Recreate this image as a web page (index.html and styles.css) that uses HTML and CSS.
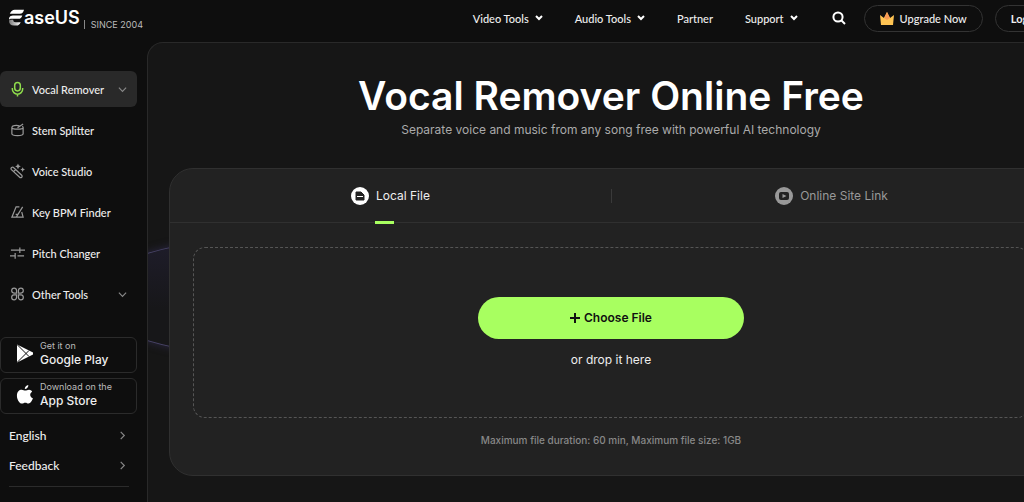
FILE: index.html
```html
<!DOCTYPE html>
<html lang="en">
<head>
  <meta charset="UTF-8" />
  <meta name="viewport" content="width=device-width, initial-scale=1" />
  <title>Vocal Remover Online Free - EaseUS</title>
  <link rel="stylesheet" href="styles.css">
</head>
<body>
<div class="page">
  <header class="topbar">
    <a class="logo" href="#" aria-label="EaseUS">
      <svg class="logo-mark" viewBox="0 0 18 20" aria-hidden="true">
        <defs>
          <linearGradient id="fade" x1="1" x2="0">
            <stop offset="0" stop-color="#fff" />
            <stop offset="1" stop-color="#777" />
          </linearGradient>
        </defs>
        <path fill="#fff" d="M1 5C2 2 4 0 7 0h11c-1 3-2 5-5 5z" />
        <path fill="#fff" d="M0 12c0-4 2-5 6-5h10c-1 3-2 4-5 4H6c-3 0-5 0-6 1z" />
        <path fill="url(#fade)" d="M0 13c1-1 3-1 5-1 0 2 1 3 3 3h6c-1 3-3 4-5 4H6c-4 0-6-2-6-6z" />
      </svg>
      <span class="logo-text">aseUS</span>
      <span class="since">SINCE 2004</span>
    </a>
    <nav class="topnav">
      <a href="#">Video Tools <svg class="caret" viewBox="0 0 8 6"><path d="M1 1l3 3 3-3" /></svg></a>
      <a href="#">Audio Tools <svg class="caret" viewBox="0 0 8 6"><path d="M1 1l3 3 3-3" /></svg></a>
      <a href="#">Partner</a>
      <a href="#">Support <svg class="caret" viewBox="0 0 8 6"><path d="M1 1l3 3 3-3" /></svg></a>
    </nav>
    <div class="actions">
      <button class="search" aria-label="Search">
        <svg viewBox="0 0 14 14"><circle cx="6" cy="6" r="4.6" /><path d="M9.500 9.500L13 13" /></svg>
      </button>
      <a class="pill upgrade" href="#">
        <svg class="crown" viewBox="0 0 14 13">
          <path fill="#ffc453" d="M0 3l4 3 3-6 3 6 4-3-1 10H1z" />
          <path fill="#f79a55" d="M7 0L4 6l3 2 3-2z" />
        </svg>
        Upgrade Now
      </a>
      <a class="pill login" href="#">Log in</a>
    </div>
  </header>

  <div class="layout">
    <aside class="sidebar">
      <nav class="tools">
        <a class="tool active" href="#">
          <svg viewBox="0 0 16 16"><rect x="5" y="1" width="6" height="9" rx="3" /><path d="M2.500 7v1a5.500 5.500 0 0 0 11 0V7M8 13.500V16" /></svg>
          <span>Vocal Remover</span>
          <svg class="arrow" viewBox="0 0 10 10"><path d="M1 3l4 4 4-4" /></svg>
        </a>
        <a class="tool" href="#">
          <svg viewBox="0 0 16 16"><path d="M10 3.500C6 2.700 2 3.500 2 5.200c0 2.400 12 2.400 12 0 0-.5-.4-.9-1-1.200M2 5.200V12c0 2.600 12 2.600 12 0V5.200M8 5.500L14 1.500" /></svg>
          <span>Stem Splitter</span>
        </a>
        <a class="tool" href="#">
          <svg viewBox="0 0 16 16"><path d="M1.500 6.500a1.500 1.500 0 0 1 2.500-2l8.500 8a1.500 1.500 0 0 1-2.200 2.200zM4 8.500l2-2" /><path class="solid" d="M8.500 0l1 2 2 1-2 1-1 2-1-2-2-1 2-1zM13.500 4l.8 1.700 1.700.8-1.700.8-.8 1.700-.8-1.700-1.700-.8 1.700-.8z" /></svg>
          <span>Voice Studio</span>
        </a>
        <a class="tool" href="#">
          <svg viewBox="0 0 16 16"><path d="M10 2.500H6.500L2 13.500h12L12.500 8M7 13l6.500-10.500M6 10.500h3" /></svg>
          <span>Key BPM Finder</span>
        </a>
        <a class="tool" href="#">
          <svg viewBox="0 0 16 16"><path d="M1 5h9M10.500 2v6M11 5h5M0 11h5M5.500 8v6M8 11h7" /></svg>
          <span>Pitch Changer</span>
        </a>
        <a class="tool" href="#">
          <svg viewBox="0 0 16 16"><path d="M7 7H4.200A2.600 2.600 0 1 1 7 4.200zM9 7V4.200A2.600 2.600 0 1 1 11.800 7zM7 9v2.800A2.600 2.600 0 1 1 4.200 9zM9 9h2.800A2.600 2.600 0 1 1 9 11.800z" /></svg>
          <span>Other Tools</span>
          <svg class="arrow" viewBox="0 0 10 10"><path d="M1 3l4 4 4-4" /></svg>
        </a>
      </nav>

      <div class="stores">
        <a class="store" href="#">
          <svg viewBox="0 0 18 18"><path fill="#fff" d="M1 0l16 8v2L1 18z" /><path fill="none" stroke="#111" d="M1 0l12 12M1 18L13 6" /></svg>
          <span><small>Get it on</small>Google Play</span>
        </a>
        <a class="store" href="#">
          <svg viewBox="0 0 18 20"><path fill="#fff" d="M12.500 0c.2 2-1.500 4.200-3.700 4.200C8.500 2.300 10.300.3 12.500 0zM16.500 7c-3 1.800-2.500 5.500.8 7-.8 2.500-2.600 5.500-4.600 5.500-1.300 0-1.800-.8-3.400-.8s-2.100.8-3.400.8C3 19.500.5 15 .5 11.200.5 7 3 5 5.500 5c1.600 0 2.700.9 3.800.9S11.700 5 13.300 5c1.300 0 2.500.8 3.200 2z" /></svg>
          <span><small>Download on the</small>App Store</span>
        </a>
      </div>

      <div class="links">
        <a href="#">English <svg class="arrow" viewBox="0 0 10 10"><path d="M3 1l4 4-4 4" /></svg></a>
        <a href="#">Feedback <svg class="arrow" viewBox="0 0 10 10"><path d="M3 1l4 4-4 4" /></svg></a>
      </div>
    </aside>

    <main class="content">
      <h1>Vocal Remover Online Free</h1>
      <p class="subtitle">Separate voice and music from any song free with powerful AI technology</p>

      <section class="card">
        <div class="tabs" role="tablist">
          <button class="tab selected" role="tab" aria-selected="true">
            <svg viewBox="0 0 18 18"><circle cx="9" cy="9" r="9" fill="#fff" /><path fill="#222" d="M5 5h5l3 3v5H5z" stroke="#222" stroke-linejoin="round" /><path stroke="#fff" d="M6 9.500h6" /></svg>
            Local File
          </button>
          <button class="tab" role="tab" aria-selected="false">
            <svg viewBox="0 0 18 18"><circle cx="9" cy="9" r="9" fill="#999" /><rect x="4" y="5" width="10" height="8" rx="2" fill="#222" /><path fill="#999" d="M7.500 7l4 2-4 2z" /></svg>
            Online Site Link
          </button>
        </div>
        <div class="dropzone">
          <button class="choose">
            <svg viewBox="0 0 10 10"><path d="M5 0v10M0 5h10" /></svg>
            Choose File
          </button>
          <p>or drop it here</p>
        </div>
        <p class="limits">Maximum file duration: 60 min, Maximum file size: 1GB</p>
      </section>
    </main>
  </div>
</div>
</body>
</html>
```
FILE: styles.css
```css
* {
  box-sizing: border-box;
}
body {
  margin: 0;
  background-color: #0e0e0e;
  color: #eee;
  font-family: Inter, "Noto Sans", Arial, sans-serif;
  font-size: 12px;
  font-weight: 400;
  overflow: hidden;
}
a {
  color: inherit;
  text-decoration: none;
}
button {
  font: inherit;
  color: inherit;
  background: none;
  border: 0;
  padding: 0;
  cursor: pointer;
}
h1,
p {
  margin: 0;
}
svg {
  flex: none;
}
.page {
  min-width: 1074px;
  min-height: 100vh;
  display: flex;
  flex-direction: column;
}

/* header */
.topbar {
  height: 42px;
  padding: 0 18px 6px 9px;
  display: flex;
  align-items: center;
}
.logo {
  display: flex;
  align-items: center;
  margin-right: auto;
}
.logo-mark {
  width: 15px;
  height: 20px;
}
.logo-text {
  font-size: 18px;
  font-weight: 600;
  line-height: 20px;
  color: #fff;
}
.since {
  margin: 12px 0 0 4px;
  padding-left: 6px;
  border-left: 1px solid #888;
  font-size: 9px;
  line-height: 9px;
  color: #bbb;
}
.topnav,
.pill,
.tool,
.links {
  font-family: Lato, "Noto Sans", Arial, sans-serif;
  font-size: 11px;
  font-weight: 500;
}
.topnav {
  display: flex;
  gap: 32px;
}
.topnav a {
  display: flex;
  align-items: center;
  gap: 6px;
}
.caret {
  width: 8px;
  height: 6px;
  fill: none;
  stroke: #fff;
  stroke-width: 2;
}
.actions {
  display: flex;
  align-items: center;
  gap: 12px;
  margin-left: 34px;
}
.search {
  display: flex;
  margin-right: 6px;
}
.search svg {
  width: 14px;
  height: 14px;
  fill: none;
  stroke: #fff;
  stroke-width: 2;
}
.pill {
  height: 27px;
  padding: 0 15px;
  display: flex;
  align-items: center;
  gap: 6px;
  border: 1px solid #333;
  border-radius: 14px;
}
.crown {
  width: 14px;
  height: 13px;
}
.login {
  font-weight: 700;
}

/* sidebar */
.layout {
  display: flex;
  flex: 1;
}
.sidebar {
  width: 137px;
  padding-top: 29px;
}
.tools {
  display: flex;
  flex-direction: column;
  gap: 5px;
}
.tool {
  height: 36px;
  padding: 0 10px;
  display: flex;
  align-items: center;
  gap: 7px;
  border-radius: 6px;
  white-space: nowrap;
}
.tool svg {
  width: 15px;
  height: 16px;
  fill: none;
  stroke: #999;
  stroke-width: 1.3;
}
.tool svg .solid {
  fill: #999;
  stroke: none;
}
.tool.active {
  background-color: #292929;
}
.tool.active svg:first-child {
  stroke: #8fdc4c;
  stroke-width: 1.6;
}
.tool .arrow,
.links .arrow {
  width: 9px;
  height: 9px;
  margin-left: auto;
  fill: none;
  stroke: #888;
  stroke-width: 1.3;
}
.stores {
  display: flex;
  flex-direction: column;
  gap: 5px;
  margin-top: 25px;
}
.store {
  height: 36px;
  padding: 0 0 4px 15px;
  display: flex;
  align-items: center;
  gap: 6px;
  border: 1px solid #2b2b2b;
  border-radius: 6px;
  font-weight: 500;
  line-height: 15px;
}
.store svg {
  width: 18px;
  height: 19px;
}
.store small {
  display: block;
  font-size: 9px;
  font-weight: 400;
  line-height: 12px;
  color: #bbb;
}
.links {
  margin: 6px 8px 0 9px;
  padding-bottom: 6px;
  border-bottom: 1px solid #2b2b2b;
  font-size: 12px;
}
.links a {
  height: 30px;
  padding-right: 2px;
  display: flex;
  align-items: center;
}

/* main area */
.content {
  position: relative;
  flex: 1;
  margin-left: 10px;
  padding: 30px 21px 27px;
  border: 1px solid #292929;
  border-right: 0;
  border-bottom: 0;
  border-top-left-radius: 16px;
  background-color: #161616;
  text-align: center;
  overflow: hidden;
}
/* violet glow behind the card */
.content::before {
  content: "";
  position: absolute;
  left: -60px;
  top: 192px;
  width: 400px;
  height: 122px;
  border: 1px solid #474266;
  border-radius: 50%;
  background: linear-gradient(#1f1d2c, #171719 60%);
  box-shadow: 0 0 8px #2b2742;
}
.content h1 {
  font-size: 39px;
  font-weight: 600;
  line-height: 46px;
  color: #fff;
}
.subtitle {
  line-height: 22px;
  color: #aaa;
}
.card {
  position: relative;
  margin-top: 27px;
  border: 1px solid #303030;
  border-radius: 24px;
  background-color: #222;
}
.tabs {
  height: 54px;
  display: flex;
  align-items: center;
  border-bottom: 1px solid #303030;
}
.tab {
  position: relative;
  flex: 1;
  height: 100%;
  display: flex;
  align-items: center;
  justify-content: center;
  gap: 7px;
  color: #999;
}
.tab svg {
  width: 18px;
  height: 18px;
}
.tab.selected {
  color: #eee;
}
.tab.selected::after {
  content: "";
  position: absolute;
  bottom: -2px;
  left: 50%;
  width: 19px;
  height: 3px;
  margin-left: -16px;
  background-color: #a8ff60;
}
.tab + .tab::before {
  content: "";
  position: absolute;
  left: 0;
  top: 20px;
  height: 14px;
  border-left: 1px solid #3a3a3a;
}
.dropzone {
  margin: 24px 23px 0;
  padding: 49px 0 48px;
  display: flex;
  flex-direction: column;
  align-items: center;
  gap: 12px;
  border: 1px dashed #555;
  border-radius: 12px;
  line-height: 18px;
}
.choose {
  width: 266px;
  height: 42px;
  display: flex;
  align-items: center;
  justify-content: center;
  gap: 4px;
  border-radius: 21px;
  background-color: #a8ff60;
  color: #111;
  font-weight: 600;
}
.choose svg {
  width: 10px;
  height: 10px;
  stroke: #111;
  stroke-width: 2;
}
.limits {
  padding: 13px 0 26px;
  font-size: 10px;
  font-weight: 500;
  line-height: 18px;
  color: #888;
}
```
